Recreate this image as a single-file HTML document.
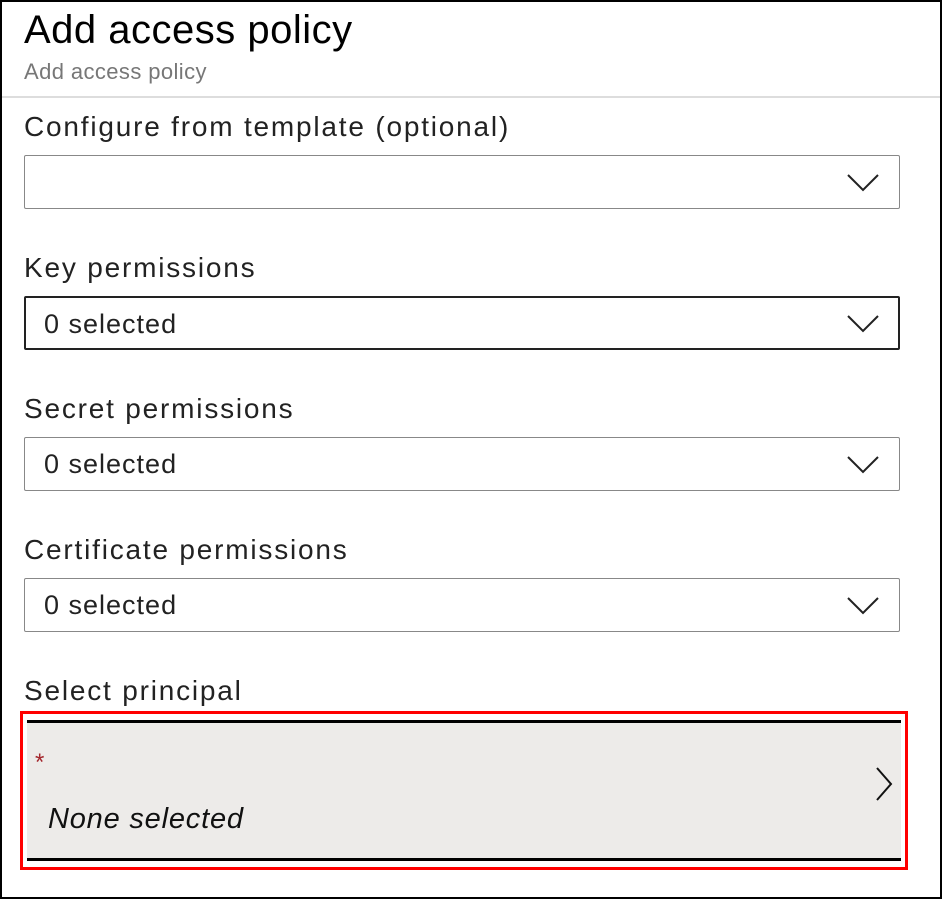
<!DOCTYPE html>
<html><head><style>
body{margin:0;width:942px;height:899px;background:#fff;font-family:"Liberation Sans",sans-serif;position:relative;overflow:hidden}
.frame{position:absolute;left:0;top:0;width:938px;height:895px;border:2px solid #000}
.t{position:absolute;left:24px;top:8px;font-size:40px;letter-spacing:0.5px;color:#000}
.st{position:absolute;left:24px;top:59px;font-size:22px;letter-spacing:0.4px;color:#777}
.sep{position:absolute;left:2px;right:2px;top:96px;height:2px;background:#ddd}
.lbl{position:absolute;left:24px;font-size:28px;letter-spacing:1.8px;color:#222}
.box{position:absolute;left:24px;width:876px;height:54px;border:1px solid #888;border-radius:2px;box-sizing:border-box}
.box span{position:absolute;left:19px;top:11px;font-size:27px;letter-spacing:1px;color:#222}
.box svg{position:absolute;right:20px;top:18px}
.red{position:absolute;left:20px;top:711px;width:882px;height:153px;border:3px solid #f00;background:#fff}
.gray{position:absolute;left:4px;right:4px;top:6px;bottom:6px;background:#edebe9;border-top:3px solid #000;border-bottom:3px solid #000}
</style></head><body>
<div class="frame"></div>
<div class="t">Add access policy</div>
<div class="st">Add access policy</div>
<div class="sep"></div>
<div class="lbl" style="top:111px">Configure from template (optional)</div>
<div class="box" style="top:155px"><svg width="32" height="18"><path d="M1 1L16 16L31 1" fill="none" stroke="#222" stroke-width="2"/></svg></div>
<div class="lbl" style="top:252px">Key permissions</div>
<div class="box" style="top:296px;border:2px solid #222"><span style="left:18px">0 selected</span><svg width="32" height="18" style="right:19px;top:17px"><path d="M1 1L16 16L31 1" fill="none" stroke="#222" stroke-width="2"/></svg></div>
<div class="lbl" style="top:393px">Secret permissions</div>
<div class="box" style="top:437px"><span>0 selected</span><svg width="32" height="18"><path d="M1 1L16 16L31 1" fill="none" stroke="#222" stroke-width="2"/></svg></div>
<div class="lbl" style="top:534px">Certificate permissions</div>
<div class="box" style="top:578px"><span>0 selected</span><svg width="32" height="18"><path d="M1 1L16 16L31 1" fill="none" stroke="#222" stroke-width="2"/></svg></div>
<div class="lbl" style="top:675px">Select principal</div>
<div class="red"><div class="gray">
<div style="position:absolute;left:8px;top:26px;color:#a4262c;font-size:24px">*</div>
<div style="position:absolute;left:21px;top:80px;font-size:29px;letter-spacing:0.8px;font-style:italic;color:#111">None selected</div>
<svg style="position:absolute;right:8px;top:44px" width="18" height="34"><path d="M2 1L16 17L2 33" fill="none" stroke="#111" stroke-width="2"/></svg>
</div></div>
</body></html>
